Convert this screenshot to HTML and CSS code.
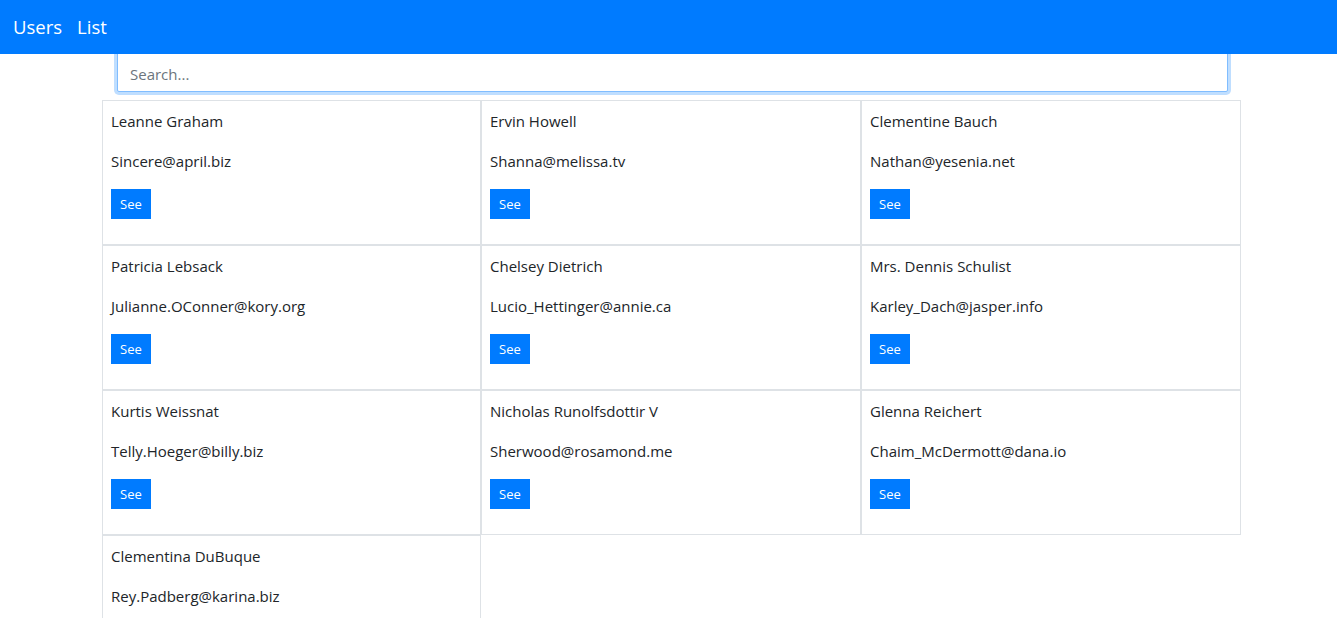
FILE: index.html
```html
<!DOCTYPE html>
<html lang="en">
<head>
<meta charset="utf-8">
<title>Users List</title>
<link rel="stylesheet" href="styles.css">
</head>
<body>
<header class="topbar">
  <span class="brand">Users</span>
  <span class="brand">List</span>
</header>
<div class="search-wrap">
  <input class="search" type="text" placeholder="Search...">
</div>
<main class="grid">
  <div class="card"><p>Leanne Graham</p><p>Sincere@april.biz</p><button class="btn">See</button></div>
  <div class="card"><p>Ervin Howell</p><p>Shanna@melissa.tv</p><button class="btn">See</button></div>
  <div class="card"><p>Clementine Bauch</p><p>Nathan@yesenia.net</p><button class="btn">See</button></div>
  <div class="card"><p>Patricia Lebsack</p><p>Julianne.OConner@kory.org</p><button class="btn">See</button></div>
  <div class="card"><p>Chelsey Dietrich</p><p>Lucio_Hettinger@annie.ca</p><button class="btn">See</button></div>
  <div class="card"><p>Mrs. Dennis Schulist</p><p>Karley_Dach@jasper.info</p><button class="btn">See</button></div>
  <div class="card"><p>Kurtis Weissnat</p><p>Telly.Hoeger@billy.biz</p><button class="btn">See</button></div>
  <div class="card"><p>Nicholas Runolfsdottir V</p><p>Sherwood@rosamond.me</p><button class="btn">See</button></div>
  <div class="card"><p>Glenna Reichert</p><p>Chaim_McDermott@dana.io</p><button class="btn">See</button></div>
  <div class="card"><p>Clementina DuBuque</p><p>Rey.Padberg@karina.biz</p><button class="btn">See</button></div>
</main>
</body>
</html>
```
FILE: styles.css
```css
* { box-sizing: border-box; }
html, body { margin: 0; padding: 0; }
body {
  font-family: "Open Sans", "Noto Sans", sans-serif;
  font-size: 15px;
  color: #212529;
  background: #fff;
}
.topbar {
  position: relative;
  z-index: 2;
  height: 54px;
  background: #007bff;
  display: flex;
  align-items: center;
  gap: 15px;
  padding: 1px 0 0 13px;
}
.brand {
  color: #fff;
  font-size: 18.5px;
  line-height: 1;
}
.search-wrap {
  margin: -2px 0 0 117px;
  width: 1111px;
}
.search {
  display: block;
  width: 100%;
  height: 40px;
  border: 1px solid #80bdff;
  border-radius: 2px;
  box-shadow: 0 0 0 3px rgba(0, 123, 255, 0.25);
  padding: 4px 12px 0;
  font-family: inherit;
  font-size: 15px;
  color: #495057;
  outline: none;
}
.search::placeholder { color: #6c757d; }
.grid {
  margin: 8px 0 0 102px;
  width: 1139px;
  display: grid;
  grid-template-columns: 379px 380px 380px;
}
.card {
  border: 1px solid #dee2e6;
  padding: 8px 8px 9px;
}
.card p {
  margin: 0 0 16px;
  line-height: 24px;
}
.btn {
  display: block;
  height: 30px;
  padding: 0 9px;
  border: 0;
  border-radius: 0;
  background: #007bff;
  color: #fff;
  font-family: inherit;
  font-size: 13px;
  margin-bottom: 16px;
}
```
